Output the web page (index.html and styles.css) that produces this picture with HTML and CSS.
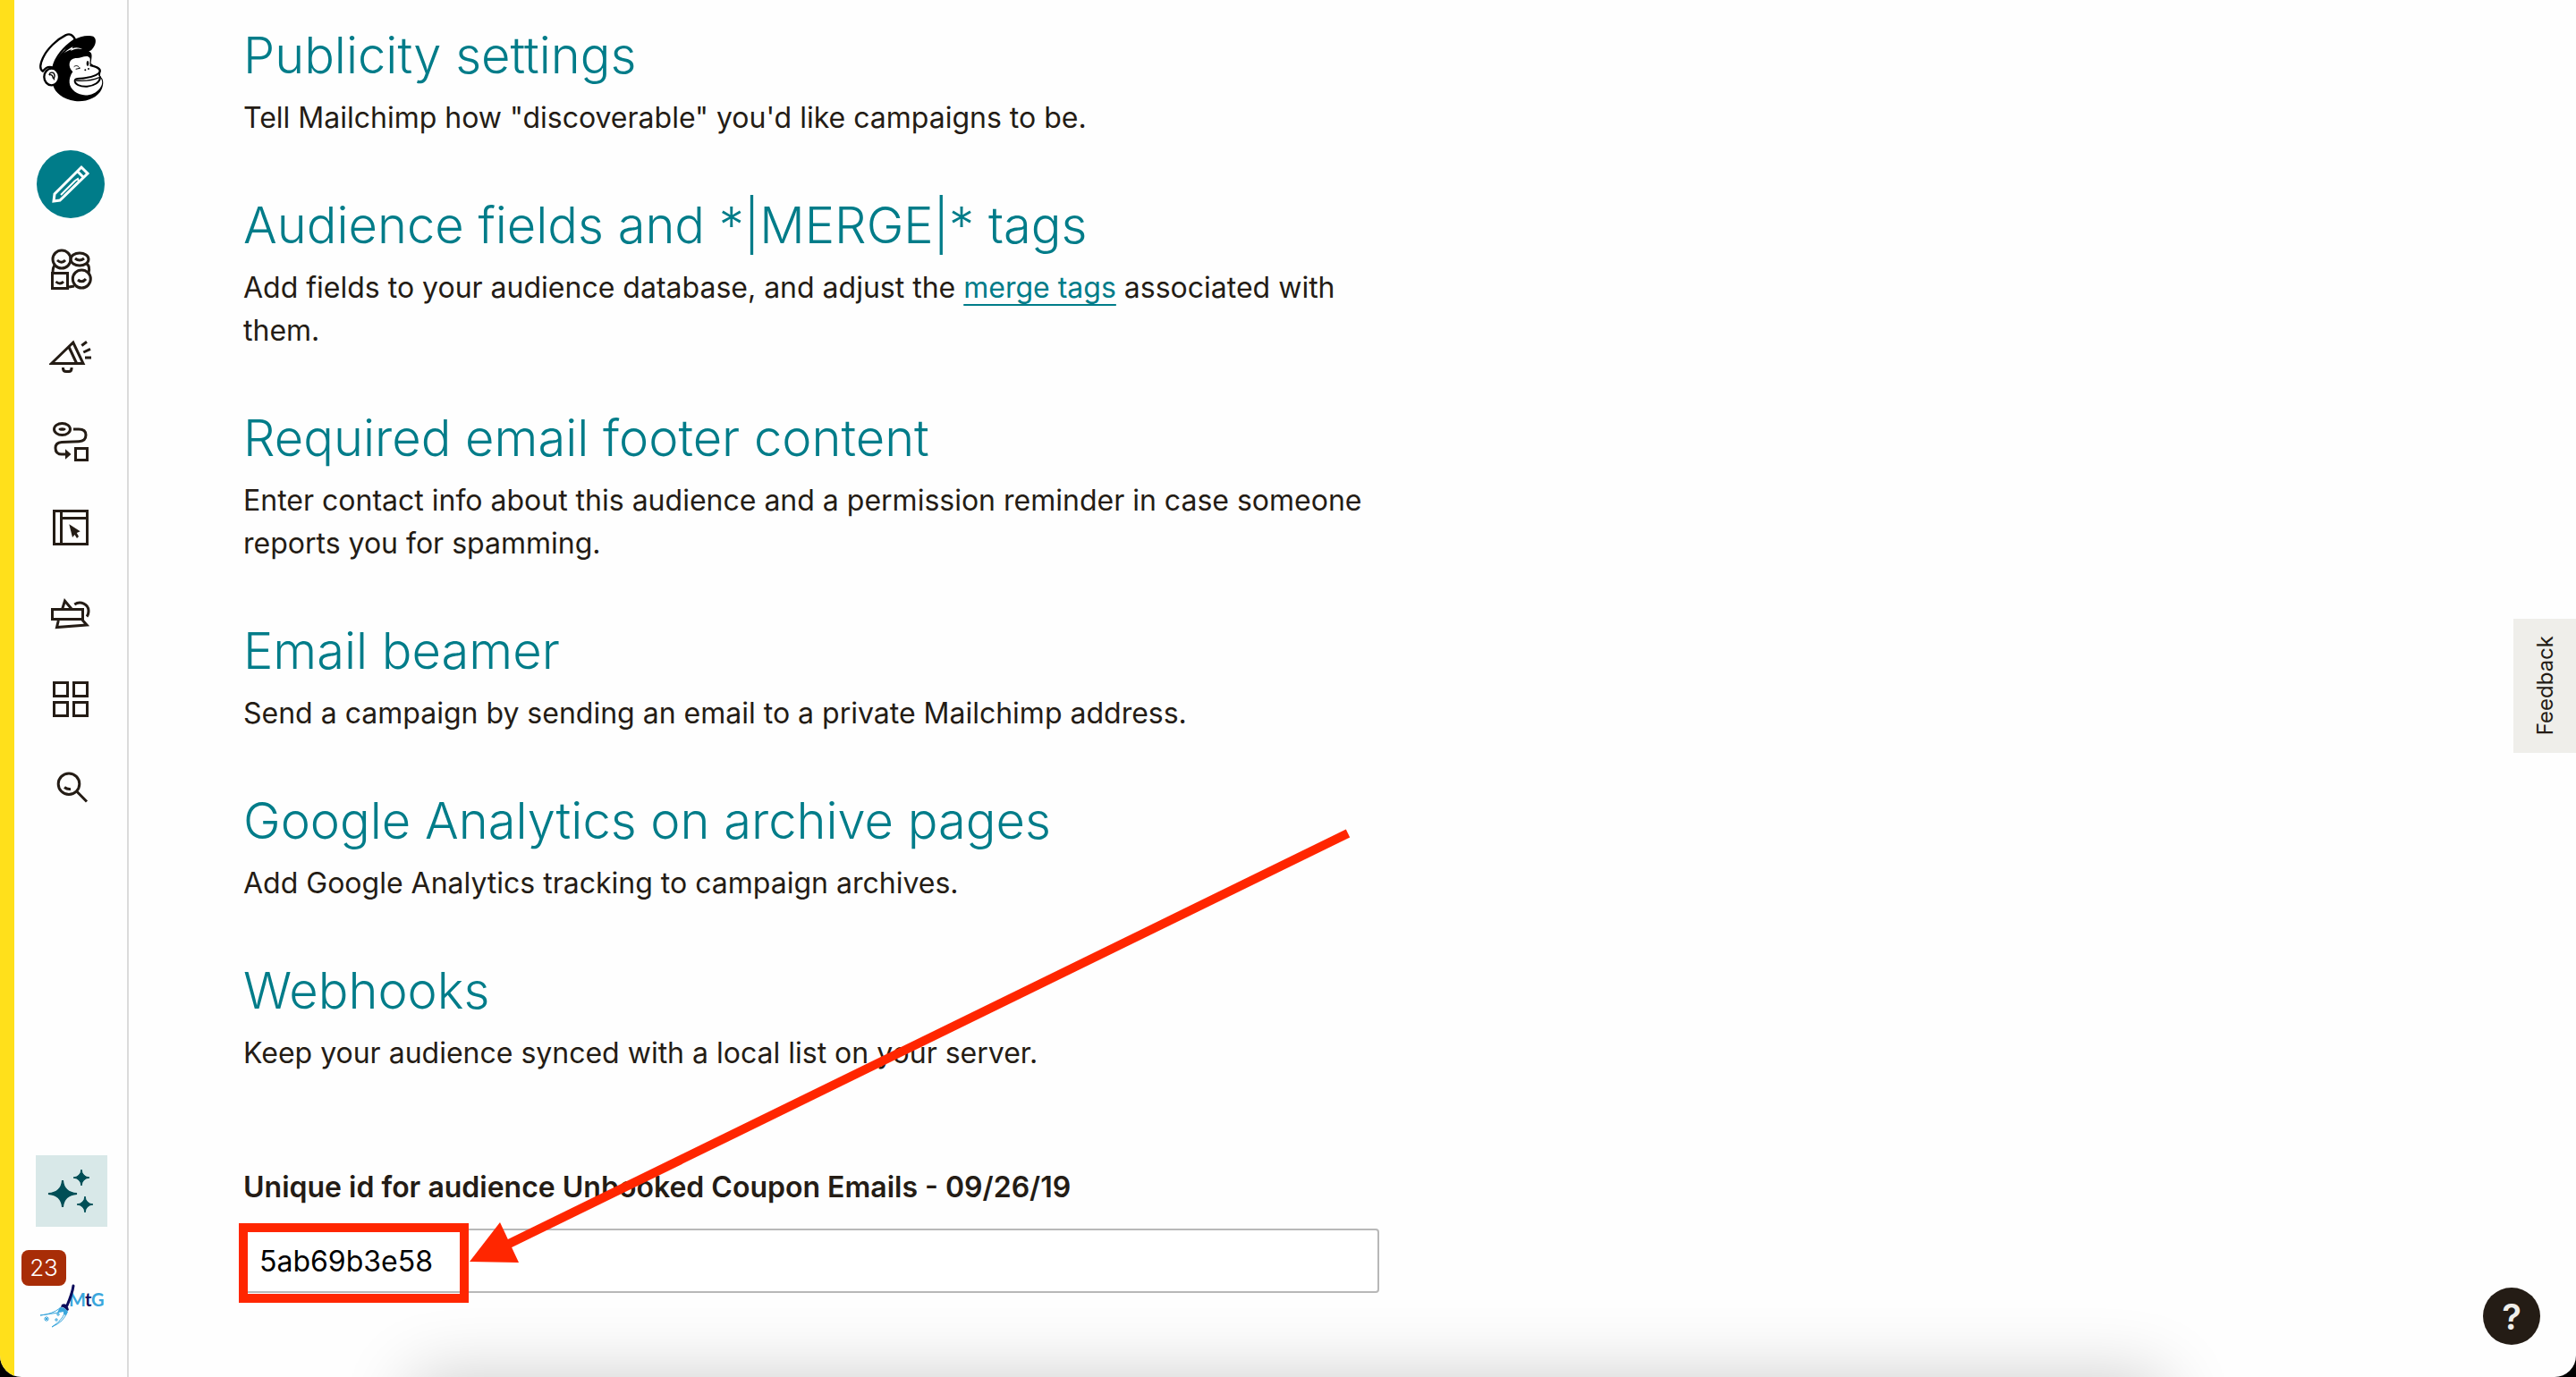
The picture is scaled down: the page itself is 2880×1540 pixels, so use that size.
FILE: index.html
```
<!DOCTYPE html>
<html lang="en">
<head>
    <meta charset="UTF-8"/>
    <title>Audience settings | Mailchimp</title>
    <link rel="stylesheet" href="styles.css">
</head>
<body>
<div class="app">
    <aside class="sidebar">
        <a href="#" class="logo" aria-label="Mailchimp">
            <svg viewBox="0 0 270 270" width="90" height="90">
                <path d="M70 140 C78 108 98 84 122 70 L150 50 L196 86 C203 94 198 108 197 122 C207 133 221 130 229 142 C233 152 224 160 230 168 C240 176 240 194 233 209 C219 239 180 253 144 249 C102 243 77 222 70 196 Z" fill="#000"/>
                <path d="M36 149 C22 141 29 119 36 104 C50 74 83 42 112 28 C125 22 136 25 144 43 C116 62 81 92 70 137 C55 131 44 138 36 149 Z" fill="#fff" stroke="#000" stroke-width="7" stroke-linejoin="round"/>
                <path d="M140 44 C159 31 190 26 206 33 C219 43 211 65 201 75 C192 88 177 78 157 81 C137 77 118 84 101 98 C107 74 121 58 140 44 Z" fill="#000"/>
                <path d="M107 88 C120 76 128 70 137 67 L134 73 C146 67 158 69 168 75 C151 71 140 74 129 81 L132 76 C121 79 116 83 107 88 Z" fill="#fff"/>
                <ellipse cx="65" cy="168" rx="25" ry="28" fill="#fff" stroke="#000" stroke-width="7"/>
                <path d="M57 162 C59 150 75 151 75 164 C77 170 69 170 74 178 M57 162 C66 158 69 164 70 173" fill="none" stroke="#000" stroke-width="4"/>
                <path d="M136 151 C119 134 121 108 145 105 C162 108 181 91 193 104 C197 113 190 121 196 130 C206 137 225 134 227 146 C229 158 216 158 227 169 C239 181 235 197 227 206 C208 232 167 237 142 217 C122 201 119 176 136 151 Z" fill="#fff"/>
                <path d="M196 130 C211 134 227 136 227 149 C225 162 200 168 177 172 C162 176 145 169 143 180 C142 193 160 201 184 200 C207 198 227 187 228 169" fill="none" stroke="#000" stroke-width="6" stroke-linecap="round"/>
                <path d="M147 180 C177 184 205 178 225 170" fill="none" stroke="#000" stroke-width="4"/>
                <path d="M140 134 C148 127 156 132 160 139 M146 142 L160 139" fill="none" stroke="#000" stroke-width="3"/>
                <ellipse cx="186" cy="123" rx="4" ry="9" fill="#000"/>
                <circle cx="178" cy="145" r="3"/>
                <circle cx="189" cy="141" r="3"/>
            </svg>
        </a>

        <nav class="nav">
            <a href="#" class="nav-item active" aria-label="Create">
                <svg viewBox="0 0 48 48">
                    <path d="M5 43 L6 35 L36 5 L43 12 L12 42 Z M31 9 L39 17"/>
                    <path class="thin" d="M13 36 L29 20 M17 37 L33 21 M29 20 L32 18 L33 21"/>
                </svg>
            </a>
            <a href="#" class="nav-item" aria-label="Audience">
                <svg viewBox="0 0 48 48">
                    <circle cx="14" cy="12" r="10"/>
                    <ellipse cx="34" cy="12" rx="10" ry="7"/>
                    <rect x="3.5" y="27.5" width="17" height="17"/>
                    <circle cx="36.3" cy="34" r="10"/>
                    <path d="M4 27 Q4 20 7 18 M42 17 Q46 20 44 27 M22 43 L28 42"/>
                    <path d="M9 13 Q14 17.500 18 13 M29 11 Q34 15 39 11 M7.500 37 Q12 41 16 37 M32 35 Q37 39 41 34"/>
                </svg>
            </a>
            <a href="#" class="nav-item" aria-label="Campaigns">
                <svg viewBox="0 0 48 48">
                    <path d="M2.500 32.500 L26.800 9 L38 32.500 Z M22 14 L30.500 32"/>
                    <path d="M15.500 37 V38 Q15.500 41.500 19 41.500 H22 Q25 41.500 25 38 V37"/>
                    <path d="M36.300 12.500 L42 8.300 M38.300 20 L46 16.300 M40 26 H47"/>
                </svg>
            </a>
            <a href="#" class="nav-item" aria-label="Automations">
                <svg viewBox="0 0 48 48">
                    <ellipse cx="14.5" cy="10" rx="9" ry="6.500"/>
                    <ellipse class="solid" cx="14.5" cy="10" rx="4" ry="1.800"/>
                    <path d="M27 10 H33 Q41 10 41 16.500 Q41 23.500 33 23.700 L14 24.500 Q7 25 7 31 Q7 38 14 38 H19"/>
                    <path class="solid" d="M18 32.300 L24.500 38 L18 43.700 Z"/>
                    <rect x="29.500" y="31.500" width="13" height="13"/>
                </svg>
            </a>
            <a href="#" class="nav-item" aria-label="Website">
                <svg viewBox="0 0 48 48">
                    <path d="M5.500 5.500 H42.500 V42.500 H5.500 Z M13.500 5 V43 M13.500 13.500 H43"/>
                    <path class="solid" d="M22.300 20.300 L34.700 28.300 L30.800 30 L33 34 L31 36 L28.500 32 L26 35 Z"/>
                </svg>
            </a>
            <a href="#" class="nav-item" aria-label="Content studio">
                <svg viewBox="0 0 48 48">
                    <path d="M14.700 19 L17.500 10 L25 19 M10.300 32 L8.500 39.500 L42 37 L37 31.300"/>
                    <rect x="3.500" y="19.500" width="34" height="11"/>
                    <path d="M28.300 14 C35 9.500 44 14 44 21 C44 24 43.500 26 42 27.500"/>
                </svg>
            </a>
            <a href="#" class="nav-item" aria-label="Integrations">
                <svg viewBox="0 0 48 48">
                    <rect x="5.500" y="5.500" width="15" height="15"/>
                    <rect x="27.500" y="5.500" width="15" height="15"/>
                    <rect x="5.500" y="27.500" width="15" height="15"/>
                    <rect x="27.500" y="27.500" width="15" height="15"/>
                </svg>
            </a>
            <a href="#" class="nav-item" aria-label="Search">
                <svg viewBox="0 0 48 48">
                    <circle cx="22" cy="22.700" r="11.800"/>
                    <path d="M30.700 31 L42 42.500 M17 26.500 Q20 29 24 28.500"/>
                </svg>
            </a>
        </nav>

        <div class="sidebar-bottom">
            <button type="button" class="assistant" aria-label="Creative Assistant">
                <svg viewBox="0 0 80 80" width="80" height="80">
                    <path d="M30 28 Q31 42 46 43 Q31 44 30 58 Q29 44 14 43 Q29 42 30 28 Z" stroke-width="2"/>
                    <path d="M51 16 Q52 24 60 25 Q52 26 51 34 Q50 26 42 25 Q50 24 51 16 Z"/>
                    <path d="M55 46 Q56 54 64 55 Q56 56 55 64 Q54 56 46 55 Q54 54 55 46 Z"/>
                </svg>
            </button>
            <a href="#" class="account" aria-label="Account">
                <svg viewBox="0 2 76 52" width="76" height="52">
                    <text x="33" y="27" fill="#3aa6dc">M</text>
                    <text x="51" y="27" class="account-t">t</text>
                    <text x="58" y="27" fill="#3aa6dc">G</text>
                    <path d="M38 4 C37 12 34 19 31 26" fill="none" stroke="#0b0b5c" stroke-width="3" stroke-linecap="round"/>
                    <path d="M25 25 Q31 22 33 31 L31 32 Q27 27 24 28 Z" fill="#0b0b5c"/>
                    <path d="M23 28 Q29 28 32 33 L30 37 Q26 36 27 33 Q23 34 20 34 Z" fill="#3aa6dc"/>
                    <path d="M23 29 Q14 36 1 37 Q14 35 22 34 M31 33 Q28 44 14 50 Q25 43 28 35" fill="none" stroke="#3aa6dc" stroke-width="1"/>
                    <path d="M5 41 H11 M8 38 V44 M6 39 L10 43 M10 39 L6 43 M17 42 H21 M19 40 V44 M19 36 H23 M21 34 V38" stroke="#3aa6dc" stroke-width="1"/>
                </svg>
                <span class="badge">23</span>
            </a>
        </div>
    </aside>

    <main class="content">
        <section class="setting">
            <h2><a href="#">Publicity settings</a></h2>
            <p>Tell Mailchimp how "discoverable" you'd like campaigns to be.</p>
        </section>
        <section class="setting">
            <h2><a href="#">Audience fields and *|MERGE|* tags</a></h2>
            <p>Add fields to your audience database, and adjust the <a href="#">merge tags</a> associated with them.</p>
        </section>
        <section class="setting">
            <h2><a href="#">Required email footer content</a></h2>
            <p>Enter contact info about this audience and a permission reminder in case someone reports you for spamming.</p>
        </section>
        <section class="setting">
            <h2><a href="#">Email beamer</a></h2>
            <p>Send a campaign by sending an email to a private Mailchimp address.</p>
        </section>
        <section class="setting">
            <h2><a href="#">Google Analytics on archive pages</a></h2>
            <p>Add Google Analytics tracking to campaign archives.</p>
        </section>
        <section class="setting">
            <h2><a href="#">Webhooks</a></h2>
            <p>Keep your audience synced with a local list on your server.</p>
        </section>

        <div class="field">
            <label for="uniqueId">Unique id for audience Unbooked Coupon Emails - 09/26/19</label>
            <div class="input-wrap">
                <input type="text" id="uniqueId" value="5ab69b3e58" readonly/>
                <!-- callout: box and arrow over the id -->
                <span class="callout-box"></span>
                <svg class="callout-arrow" viewBox="0 0 990 490" width="990" height="490">
                    <path d="M982 6 L44 465" stroke="#ff2600" stroke-width="10"/>
                    <path d="M0 485 L34 441 L55 486 Z" fill="#ff2600"/>
                </svg>
            </div>
        </div>
    </main>

    <button type="button" class="feedback">Feedback</button>
    <button type="button" class="help" aria-label="Help">?</button>
    <div class="dock-shadow"></div>
</div>
</body>
</html>
```
FILE: styles.css
```
* {
    box-sizing: border-box;
}

body {
    margin: 0;
    background: #000;
    color: #241c15;
    font-family: Inter, "Liberation Sans", sans-serif;
    font-size: 32px;
    line-height: 48px;
}

a {
    color: #007c89;
}

button {
    font-family: inherit;
    border: 0;
    padding: 0;
    cursor: pointer;
}

.app {
    position: relative;
    display: flex;
    min-height: 100vh;
    background: #fefefe;
    border-radius: 0 0 24px 24px;
    overflow: hidden;
}

/* sidebar */
.sidebar {
    display: flex;
    flex-direction: column;
    align-items: center;
    flex: none;
    width: 144px;
    border-left: 16px solid #ffe01b;
    border-right: 2px solid #dbdbdb;
}

.logo {
    height: 158px;
    padding-top: 30px;
    padding-left: 4px;
}

.logo svg,
.nav-item svg,
.assistant svg,
.account svg {
    display: block;
}

.nav-item {
    display: flex;
    align-items: center;
    justify-content: center;
    width: 76px;
    height: 76px;
    margin: 10px 0 20px;
    border-radius: 50%;
}

.nav-item svg {
    width: 48px;
    height: 48px;
    fill: none;
    stroke: #241c15;
    stroke-width: 3;
}

.nav-item .solid {
    fill: #241c15;
    stroke: none;
}

.nav-item.active {
    background: #007c89;
}

.nav-item.active svg {
    stroke: #fff;
}

.nav-item .thin {
    stroke-width: 2;
}

.sidebar-bottom {
    margin-top: auto;
    margin-bottom: 52px;
    padding-left: 2px;
}

.assistant {
    display: block;
    background: #d8e8e8;
    fill: #004e56;
    stroke: #004e56;
}

.account {
    position: relative;
    display: block;
    margin-top: 64px;
    margin-left: 4px;
}

.account text {
    font-family: Lato, sans-serif;
    font-size: 20px;
    font-weight: bold;
}

.account .account-t {
    fill: #0b0b5c;
}

.badge {
    position: absolute;
    left: -20px;
    top: -38px;
    width: 50px;
    border-radius: 8px;
    background: #a82d07;
    color: #fff;
    font-size: 26px;
    font-weight: 300;
    line-height: 40px;
    text-align: center;
}

/* settings list */
.content {
    flex: 1;
    max-width: 1398px;
    padding: 30px 0 92px 128px;
}

.setting {
    margin-bottom: 64px;
}

.setting h2 {
    margin: 0 0 14px;
    font-size: 56px;
    font-weight: 300;
    line-height: 64px;
}

.setting h2 a {
    text-decoration: none;
}

.setting p {
    margin: 0;
}

.setting p a {
    text-decoration-thickness: 2px;
    text-underline-offset: 7px;
    text-decoration-skip-ink: none;
}

.field {
    margin-top: 102px;
}

.field label {
    display: block;
    margin-bottom: 22px;
    font-weight: 600;
}

.input-wrap {
    position: relative;
}

.field input {
    display: block;
    width: 100%;
    height: 72px;
    padding: 0 16px;
    border: 2px solid #b8b8b8;
    border-radius: 4px;
    background: #fff;
    color: #000;
    font-family: inherit;
    font-size: 32px;
}

.callout-box {
    position: absolute;
    left: -5px;
    top: -6px;
    width: 257px;
    height: 89px;
    border: 10px solid #ff2600;
}

.callout-arrow {
    position: absolute;
    left: 253px;
    bottom: 30px;
}

/* floating things */
.feedback {
    position: absolute;
    right: 0;
    top: 692px;
    width: 70px;
    height: 150px;
    background: #efeeea;
    color: #241c15;
    font-size: 24px;
    writing-mode: sideways-lr;
}

.help {
    position: absolute;
    right: 40px;
    bottom: 36px;
    width: 64px;
    height: 64px;
    border-radius: 50%;
    background: #241c15;
    color: #efeeea;
    font-size: 40px;
    font-weight: 600;
}

.dock-shadow {
    position: absolute;
    left: 16%;
    right: 16%;
    top: 100%;
    height: 100px;
    box-shadow: 0 0 80px rgba(0, 0, 0, 0.2);
}
```
